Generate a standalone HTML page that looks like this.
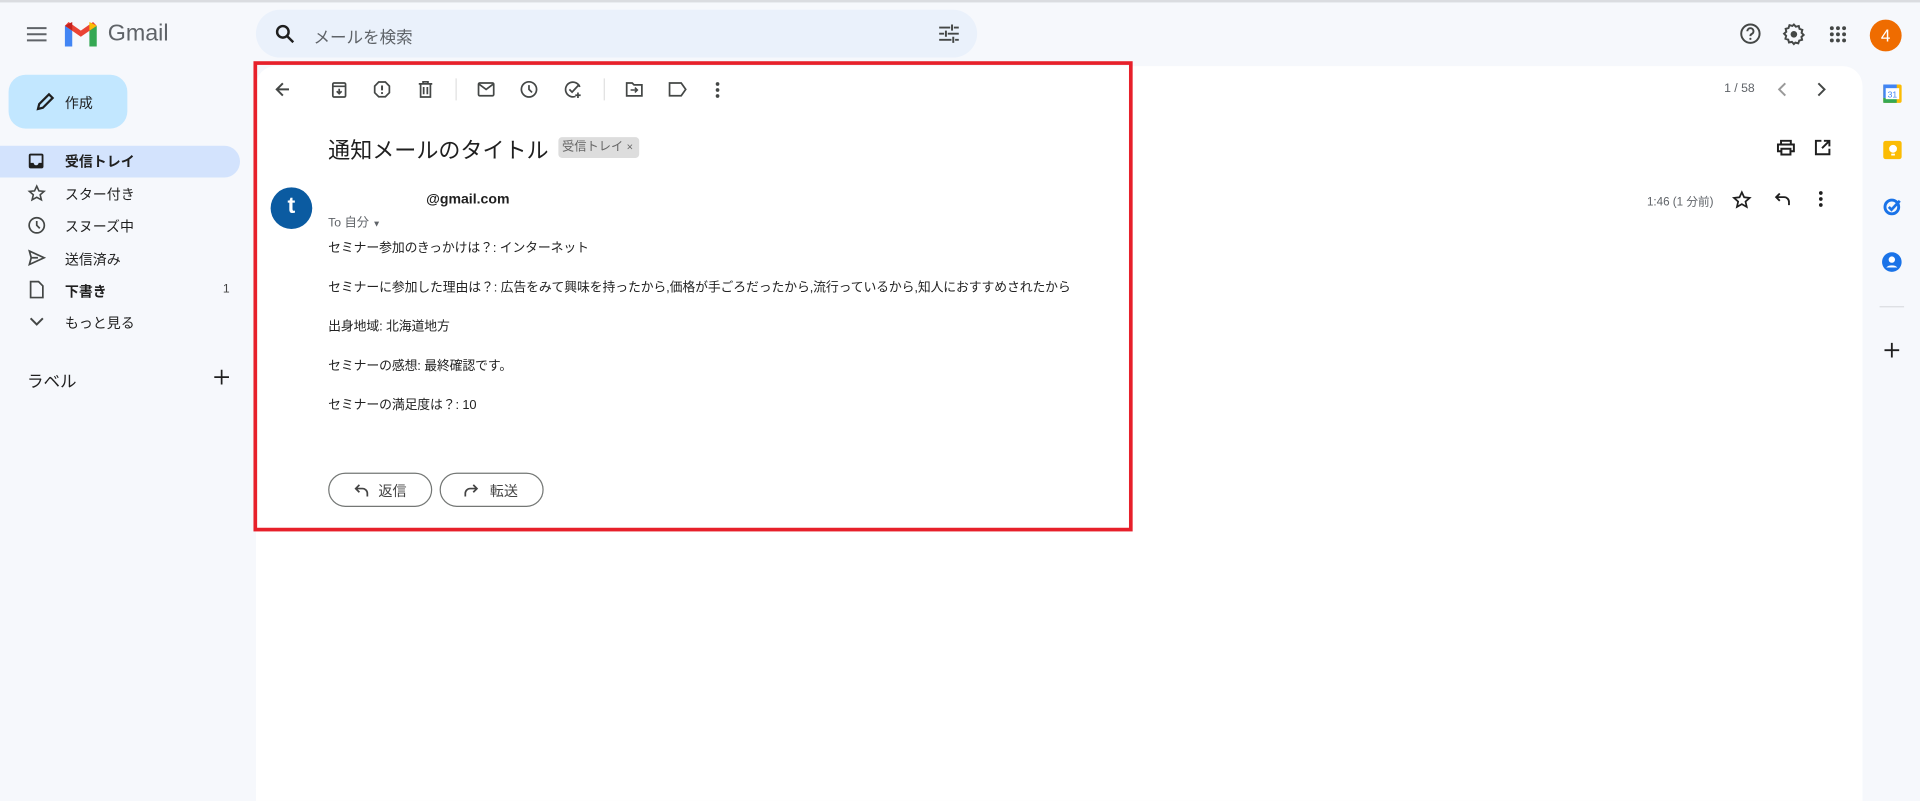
<!DOCTYPE html>
<html><head><meta charset="utf-8"><style>
*{margin:0;padding:0;box-sizing:border-box}
html,body{width:1920px;height:788px;overflow:hidden;background:#f6f8fc}
#w{position:absolute;left:0;top:0;width:1568px;height:644px;transform:scale(1.22449);transform-origin:0 0;font-family:"Liberation Sans","Noto Sans CJK JP",sans-serif;color:#1f1f1f;background:#f6f8fc}
.a{position:absolute}
svg{position:absolute;overflow:visible}
.ic{fill:none;stroke:#444746;stroke-width:1.6}
.nav{position:absolute;left:53px;font-size:11.4px;color:#1f1f1f}
.body{position:absolute;left:268px;font-size:10.5px;color:#222;letter-spacing:-0.1px}
.btn{position:absolute;top:386px;height:28px;border:1px solid #747775;border-radius:14px;font-size:12px;color:#444}
</style></head><body><div id="w">
<div class="a" style="left:0;top:0;width:1568px;height:2px;background:#dadce0"></div>
<svg style="left:22px;top:22px" width="16" height="12"><path d="M0 1h16M0 6h16M0 11h16" stroke="#5f6368" stroke-width="1.6"/></svg>
<svg style="left:53px;top:18px" width="26" height="20" viewBox="0 0 26 20">
<path d="M0 3v17h6V7z" fill="#4285f4"/><path d="M20 7v13h6V3z" fill="#34a853"/>
<path d="M0 3l13 9 13-9-3-3-10 7L3 0z" fill="#ea4335"/><path d="M0 3l6 4V0z" fill="#c5221f"/><path d="M26 3l-6 4V0z" fill="#fbbc04"/></svg>
<div class="a" style="left:88px;top:17px;font-size:19px;color:#5f6368">Gmail</div>
<div class="a" style="left:209px;top:8px;width:589px;height:39px;border-radius:20px;background:#eaf1fb"></div>
<svg style="left:225px;top:20px" width="16" height="16"><circle cx="6" cy="6" r="4.7" fill="none" stroke="#1f1f1f" stroke-width="2"/><path d="M9.5 9.5l5 5" stroke="#1f1f1f" stroke-width="2"/></svg>
<div class="a" style="left:256px;top:19px;font-size:13.5px;color:#5f6368">メールを検索</div>
<svg style="left:767px;top:20px" width="16" height="15"><path d="M0 2.5h9M12 2.5h4M0 7.5h4M7 7.5h9M0 12.5h10M13 12.5h3M10.5 0v5M5.5 5v5M11.5 10v5" stroke="#444746" stroke-width="1.6"/></svg>
<svg style="left:1421px;top:19px" width="17" height="17"><circle cx="8.5" cy="8.5" r="7.5" class="ic"/><path d="M6 6.5a2.5 2.5 0 1 1 3.5 2.3c-.8.4-1 .9-1 1.7" class="ic"/><circle cx="8.5" cy="12.7" r=".9" fill="#444746"/></svg>
<svg style="left:1456px;top:19px" width="18" height="18" viewBox="0 0 18 18"><path d="M9 1l1.6 1.8 2.4-.5.6 2.3 2.3.8-.6 2.4L17 9.5l-1.8 1.6.5 2.4-2.3.6-.8 2.3-2.4-.6L9 17l-1.6-1.8-2.4.5-.6-2.3-2.3-.8.6-2.4L1 8.5l1.8-1.6-.5-2.4 2.3-.6.8-2.3 2.4.6z" fill="none" stroke="#444746" stroke-width="1.6"/><circle cx="9" cy="9" r="2.7" fill="#444746"/></svg>
<svg style="left:1494px;top:21px" width="14" height="14"><g fill="#444746"><circle cx="2" cy="2" r="1.6"/><circle cx="7" cy="2" r="1.6"/><circle cx="12" cy="2" r="1.6"/><circle cx="2" cy="7" r="1.6"/><circle cx="7" cy="7" r="1.6"/><circle cx="12" cy="7" r="1.6"/><circle cx="2" cy="12" r="1.6"/><circle cx="7" cy="12" r="1.6"/><circle cx="12" cy="12" r="1.6"/></g></svg>
<div class="a" style="left:1527px;top:16px;width:26px;height:26px;border-radius:50%;background:#ef6c00;color:#fff;font-size:14px;text-align:center;line-height:26px">4</div>
<div class="a" style="left:7px;top:61px;width:97px;height:44px;border-radius:14px;background:#c2e7ff"></div>
<svg style="left:29px;top:75px" width="16" height="16"><path d="M2 14l1-4 8-8 3 3-8 8z" fill="none" stroke="#1f1f1f" stroke-width="1.8"/></svg>
<div class="a" style="left:53px;top:76px;font-size:11.4px;color:#1f1f1f">作成</div>
<div class="a" style="left:0;top:119px;width:196px;height:26px;border-radius:0 13px 13px 0;background:#d3e3fd"></div>
<svg style="left:23px;top:125px" width="13" height="13"><rect x="0.5" y="0.5" width="12" height="12" rx="1.5" fill="#1f1f1f"/><path d="M2 2h9v6H8.5a2 2 0 0 1-4 0H2z" fill="#d3e3fd"/></svg>
<div class="nav" style="top:124px;font-weight:bold">受信トレイ</div>
<svg style="left:23px;top:151px" width="14" height="14"><path d="M7 1l1.8 3.9 4.2.4-3.2 2.8 1 4.1L7 10.1 3.2 12.2l1-4.1L1 5.3l4.2-.4z" fill="none" stroke="#444746" stroke-width="1.3"/></svg>
<div class="nav" style="top:151px">スター付き</div>
<svg style="left:23px;top:177px" width="14" height="14"><circle cx="7" cy="7" r="6.2" class="ic" style="stroke-width:1.4"/><path d="M7 3.5V7l2.5 2.5" class="ic" style="stroke-width:1.4"/></svg>
<div class="nav" style="top:177px">スヌーズ中</div>
<svg style="left:23px;top:204px" width="14" height="13"><path d="M1 1l12 5.5L1 12l1.5-5.5z M2.5 6.5H8" class="ic" style="stroke-width:1.4"/></svg>
<div class="nav" style="top:204px">送信済み</div>
<svg style="left:24px;top:229px" width="12" height="15"><path d="M1 1h6.5L11 4.5V14H1z" class="ic" style="stroke-width:1.4"/></svg>
<div class="nav" style="top:230px;font-weight:bold">下書き</div>
<div class="a" style="left:182px;top:231px;font-size:10px;color:#444">1</div>
<svg style="left:24px;top:259px" width="12" height="8"><path d="M1 1l5 5 5-5" class="ic"/></svg>
<div class="nav" style="top:256px">もっと見る</div>
<div class="a" style="left:22px;top:300px;font-size:13.5px;color:#1f1f1f">ラベル</div>
<svg style="left:175px;top:302px" width="12" height="12"><path d="M6 0v12M0 6h12" stroke="#1f1f1f" stroke-width="1.4"/></svg>
<div class="a" style="left:209px;top:54px;width:1312px;height:600px;background:#fff;border-radius:16px 16px 0 0"></div>
<div class="a" style="left:207px;top:50px;width:718px;height:384px;border:3px solid #e7202a"></div>
<svg style="left:225px;top:67px" width="12" height="12"><path d="M11 6H1.5M6 1L1 6l5 5" class="ic"/></svg>
<svg style="left:271px;top:67px" width="12" height="13"><rect x="0.8" y="0.8" width="10.4" height="11.4" rx="1" class="ic" style="stroke-width:1.4"/><path d="M1 3.5h10M6 5.5v4M4 7.5l2 2 2-2" class="ic" style="stroke-width:1.4"/></svg>
<svg style="left:305px;top:66px" width="14" height="14"><path d="M4.3 1h5.4L13 4.3v5.4L9.7 13H4.3L1 9.7V4.3z" class="ic" style="stroke-width:1.4"/><path d="M7 3.8v4" class="ic"/><circle cx="7" cy="10" r=".9" fill="#444746"/></svg>
<svg style="left:342px;top:66px" width="11" height="14"><path d="M0 2.5h11M3.5 2.5V.8h4v1.7M1.5 2.5v10.7h8V2.5M4 5v6M7 5v6" class="ic" style="stroke-width:1.4"/></svg>
<div class="a" style="left:372px;top:64px;width:1px;height:18px;background:#e0e0e0"></div>
<svg style="left:390px;top:67px" width="14" height="12"><rect x="0.8" y="0.8" width="12.4" height="10.4" rx="1" class="ic" style="stroke-width:1.4"/><path d="M1 1.5l6 4.5 6-4.5" class="ic" style="stroke-width:1.4"/></svg>
<svg style="left:425px;top:66px" width="14" height="14"><circle cx="7" cy="7" r="6.2" class="ic" style="stroke-width:1.4"/><path d="M7 3.5V7l2.5 2.5" class="ic" style="stroke-width:1.4"/></svg>
<svg style="left:461px;top:66px" width="15" height="14"><path d="M12.5 5A6 6 0 1 0 9 12.7" class="ic" style="stroke-width:1.4"/><path d="M4 7l2.2 2.2L12 3M11 9.5v4.5M8.8 11.8h4.4" class="ic" style="stroke-width:1.4"/></svg>
<div class="a" style="left:493px;top:64px;width:1px;height:18px;background:#e0e0e0"></div>
<svg style="left:511px;top:67px" width="14" height="12"><path d="M.8 .8h4.5l1.5 1.5h6.4v9H.8z" class="ic" style="stroke-width:1.4"/><path d="M4 6.5h5.5M7.5 4.5l2 2-2 2" class="ic" style="stroke-width:1.3"/></svg>
<svg style="left:546px;top:67px" width="15" height="12"><path d="M.8 .8h9.5L14 6l-3.7 5.2H.8z" class="ic" style="stroke-width:1.4"/></svg>
<svg style="left:584px;top:67px" width="4" height="13"><g fill="#444746"><circle cx="2" cy="1.6" r="1.5"/><circle cx="2" cy="6.5" r="1.5"/><circle cx="2" cy="11.4" r="1.5"/></g></svg>
<div class="a" style="left:1408px;top:67px;font-size:10px;color:#5f6368">1 / 58</div>
<svg style="left:1451px;top:67px" width="8" height="12"><path d="M7 1L2 6l5 5" fill="none" stroke="#999" stroke-width="1.6"/></svg>
<svg style="left:1484px;top:67px" width="8" height="12"><path d="M1 1l5 5-5 5" fill="none" stroke="#444746" stroke-width="1.6"/></svg>
<div class="a" style="left:268px;top:109px;font-size:18px;color:#1f1f1f">通知メールのタイトル</div>
<div class="a" style="left:456px;top:112px;width:66px;height:17px;background:#ddd;border-radius:3px;font-size:10px;color:#666;line-height:17px;padding-left:3px">受信トレイ <span style="font-size:9px">×</span></div>
<svg style="left:1451px;top:114px" width="15" height="13"><path d="M3.5 4V1h8v3M3.5 9.5h-2.5V4h13v5.5h-2.5" fill="none" stroke="#1f1f1f" stroke-width="1.6"/><rect x="3.8" y="7.5" width="7.4" height="4.7" fill="none" stroke="#1f1f1f" stroke-width="1.6"/></svg>
<svg style="left:1482px;top:114px" width="13" height="13"><path d="M5.5 1H1v11h11V7.5M7.5 1H12v4.5M12 1L6 7" fill="none" stroke="#1f1f1f" stroke-width="1.6"/></svg>
<div class="a" style="left:221px;top:153px;width:34px;height:34px;border-radius:50%;background:#0b5ba1;color:#fff;font-size:19px;font-weight:bold;text-align:center;line-height:32px">t</div>
<div class="a" style="left:348px;top:157px;font-size:11.5px;font-weight:bold;color:#1f1f1f">@gmail.com</div>
<div class="a" style="left:268px;top:173px;font-size:10px;color:#5f6368">To 自分 <span style="font-size:7px">▼</span></div>
<div class="a" style="left:1345px;top:157px;font-size:9.5px;color:#5f6368">1:46 (1 分前)</div>
<svg style="left:1415px;top:156px" width="15" height="14"><path d="M7.5 1l1.9 4.1 4.5.5-3.4 3 1 4.4-4-2.3-4 2.3 1-4.4-3.4-3 4.5-.5z" fill="none" stroke="#1f1f1f" stroke-width="1.4"/></svg>
<svg style="left:1449px;top:157px" width="13" height="11"><path d="M12 10.5V8a4 4 0 0 0-4-4H1.5M4.5 1L1.5 4l3 3" fill="none" stroke="#1f1f1f" stroke-width="1.5"/></svg>
<svg style="left:1485px;top:156px" width="4" height="13"><g fill="#1f1f1f"><circle cx="2" cy="1.6" r="1.5"/><circle cx="2" cy="6.5" r="1.5"/><circle cx="2" cy="11.4" r="1.5"/></g></svg>
<div class="body" style="top:195px">セミナー参加のきっかけは？: インターネット</div>
<div class="body" style="top:227px">セミナーに参加した理由は？: 広告をみて興味を持ったから,価格が手ごろだったから,流行っているから,知人におすすめされたから</div>
<div class="body" style="top:259px">出身地域: 北海道地方</div>
<div class="body" style="top:291px">セミナーの感想: 最終確認です。</div>
<div class="body" style="top:323px">セミナーの満足度は？: 10</div>
<div class="btn" style="left:268px;width:85px"><svg style="left:20px;top:8px" width="12" height="11"><path d="M11 10.5V8a4 4 0 0 0-4-4H1.5M4.5 1L1.5 4l3 3" fill="none" stroke="#444" stroke-width="1.4"/></svg><span class="a" style="left:40px;top:6px;font-size:11.5px">返信</span></div>
<div class="btn" style="left:359px;width:85px"><svg style="left:19px;top:8px" width="12" height="11"><path d="M1 10.5V8a4 4 0 0 1 4-4h5.5M7.5 1l3 3-3 3" fill="none" stroke="#444" stroke-width="1.4"/></svg><span class="a" style="left:40px;top:6px;font-size:11.5px">転送</span></div>
<svg style="left:1538px;top:69px" width="15" height="15"><rect x="0" y="0" width="15" height="15" rx="1.5" fill="#fbbc04"/><rect x="0" y="0" width="11" height="11" fill="#4285f4"/><rect x="0" y="11" width="11" height="4" fill="#34a853"/><rect x="2" y="3" width="11" height="9" fill="#fff"/><text x="7.5" y="10.5" font-size="7" text-anchor="middle" fill="#4285f4" font-family="Liberation Sans">31</text></svg>
<div class="a" style="left:1538px;top:115px;width:15px;height:15px;border-radius:2px;background:#fbbc04"></div>
<svg style="left:1542px;top:118px" width="8" height="10"><circle cx="4" cy="3.5" r="3.2" fill="#fff"/><rect x="2.5" y="7.5" width="3" height="1.5" fill="#fff"/></svg>
<svg style="left:1538px;top:161px" width="15" height="15"><circle cx="7" cy="8" r="5.6" fill="none" stroke="#1a73e8" stroke-width="2.4"/><path d="M4.5 8l2.2 2.2L13.5 3" fill="none" stroke="#1a73e8" stroke-width="2.2"/></svg>
<svg style="left:1537px;top:206px" width="16" height="16"><circle cx="8" cy="8" r="8" fill="#1a73e8"/><circle cx="8" cy="6" r="2.6" fill="#fff"/><path d="M3.5 12.5a5 3.2 0 0 1 9 0z" fill="#fff"/></svg>
<div class="a" style="left:1535px;top:250px;width:20px;height:1px;background:#dadce0"></div>
<svg style="left:1539px;top:280px" width="12" height="12"><path d="M6 0v12M0 6h12" stroke="#1f1f1f" stroke-width="1.5"/></svg>
</div></body></html>
